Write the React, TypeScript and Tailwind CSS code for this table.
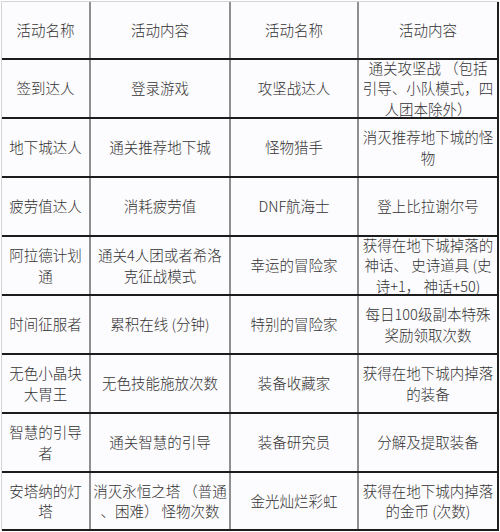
import React from 'react';

type Cell = string | string[];

const rows: Cell[][] = [
  ['活动名称', '活动内容', '活动名称', '活动内容'],
  ['签到达人', '登录游戏', '攻坚战达人', ['通关攻坚战 （包括', '引导、小队模式，四', '人团本除外）']],
  ['地下城达人', '通关推荐地下城', '怪物猎手', ['消灭推荐地下城的怪', '物']],
  ['疲劳值达人', '消耗疲劳值', 'DNF航海士', '登上比拉谢尔号'],
  [
    ['阿拉德计划', '通'],
    ['通关4人团或者希洛', '克征战模式'],
    '幸运的冒险家',
    ['获得在地下城掉落的', '神话、 史诗道具 (史', '诗+1， 神话+50)'],
  ],
  ['时间征服者', '累积在线 (分钟)', '特别的冒险家', ['每日100级副本特殊', '奖励领取次数']],
  [['无色小晶块', '大胃王'], '无色技能施放次数', '装备收藏家', ['获得在地下城内掉落', '的装备']],
  [['智慧的引导', '者'], '通关智慧的引导', '装备研究员', '分解及提取装备'],
  [['安塔纳的灯', '塔'], ['消灭永恒之塔 （普通', '、困难） 怪物次数'], '金光灿烂彩虹', ['获得在地下城内掉落', '的金币 (次数)']],
];

// column widths include each cell's right border
const colClass = [
  'w-[89px] border-r-2 border-r-[#8f8f8f]',
  'w-[140px] border-r-2 border-r-[#8f8f8f]',
  'w-[128px] border-r-2 border-r-[#8f8f8f]',
  'w-[140px] border-r-2 border-r-[#1f1f1f]',
];

function CellText({ value }: { value: Cell }) {
  const lines = Array.isArray(value) ? value : [value];
  return (
    <div className="text-center leading-[20.5px]">
      {lines.map((line, i) => (
        <span key={i} className="block whitespace-nowrap">
          {line}
        </span>
      ))}
    </div>
  );
}

export default function App() {
  return (
    <div className="w-[500px] h-[532px] bg-white pt-[1px] pl-[1px] font-['Noto_Sans_CJK_SC',sans-serif] text-[14.5px] font-light text-[#333]">
      <div className="w-fit border-l border-t border-[#d4d4d4] bg-[#fcfbfd]">
        {rows.map((row, r) => (
          <div
            key={r}
            className={`flex border-b-2 border-b-[#1c1c1c] ${r === 0 || r === rows.length - 1 ? 'h-[58px]' : 'h-[59px]'}`}
          >
            {row.map((cell, c) => (
              <div key={c} className={`flex items-center justify-center ${colClass[c]}`}>
                <CellText value={cell} />
              </div>
            ))}
          </div>
        ))}
      </div>
    </div>
  );
}
